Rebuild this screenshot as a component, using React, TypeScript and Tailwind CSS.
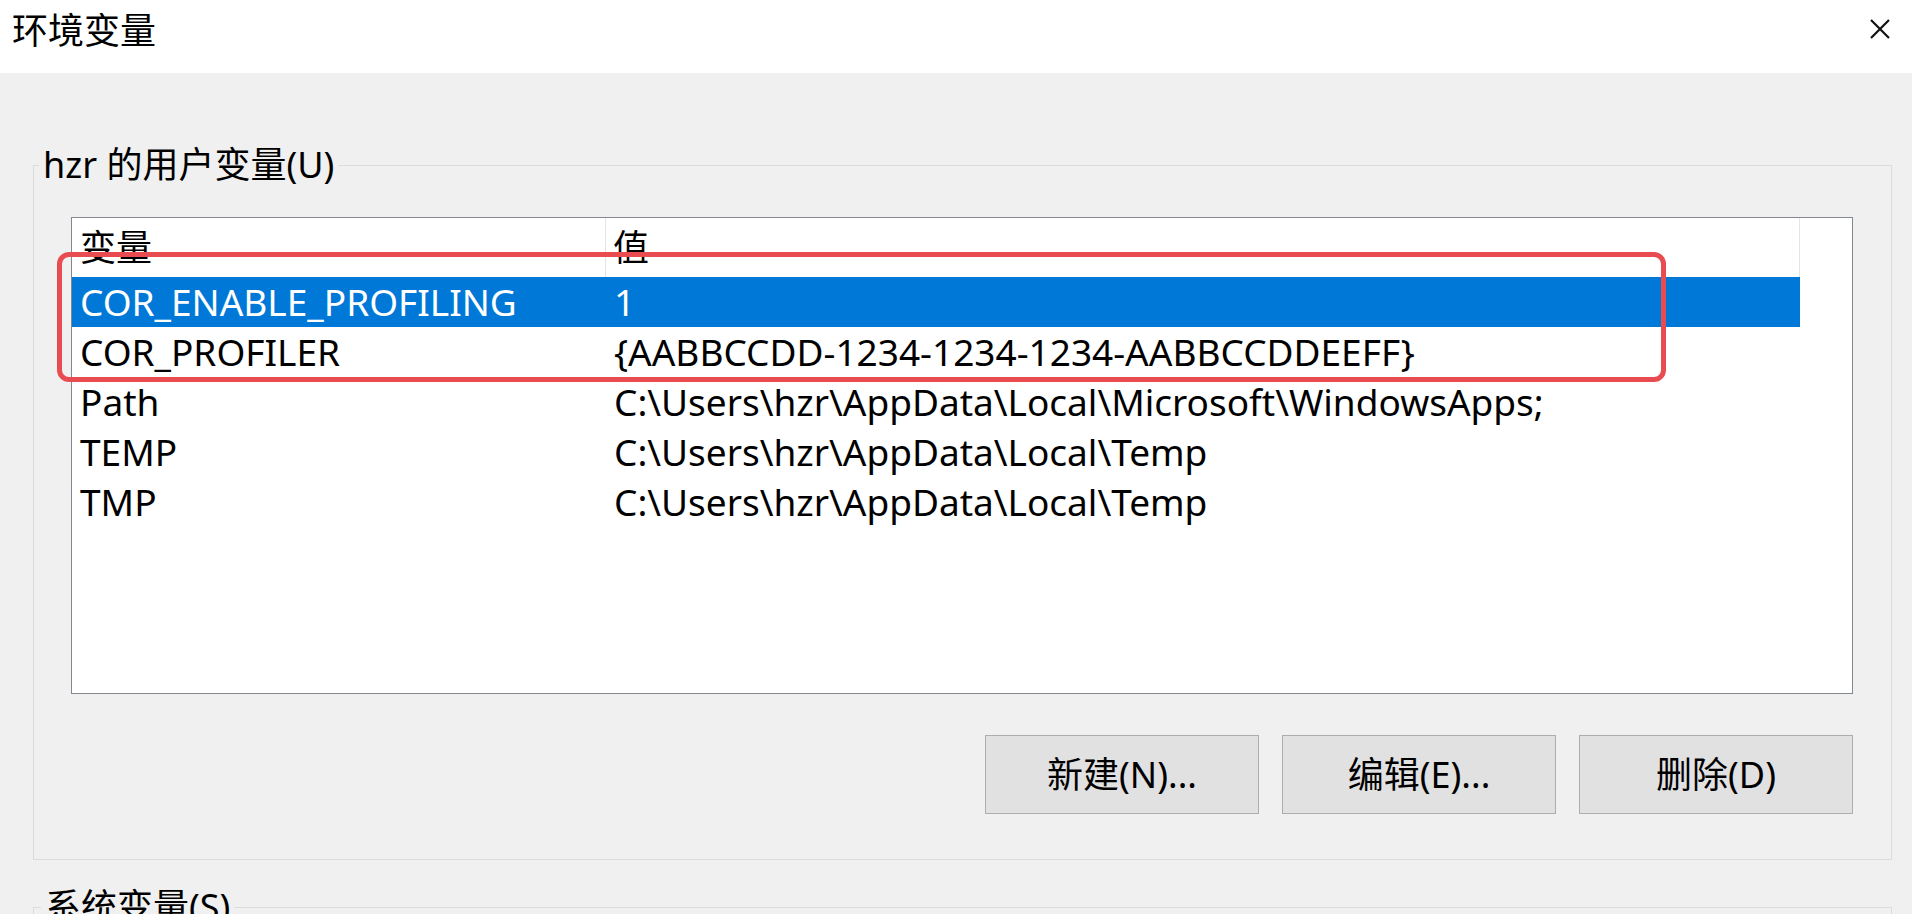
import { useState } from 'react'

const userVars = [
  { name: 'COR_ENABLE_PROFILING', value: '1' },
  { name: 'COR_PROFILER', value: '{AABBCCDD-1234-1234-1234-AABBCCDDEEFF}' },
  { name: 'Path', value: 'C:\\Users\\hzr\\AppData\\Local\\Microsoft\\WindowsApps;' },
  { name: 'TEMP', value: 'C:\\Users\\hzr\\AppData\\Local\\Temp' },
  { name: 'TMP', value: 'C:\\Users\\hzr\\AppData\\Local\\Temp' },
]

function WinButton({ label }: { label: string }) {
  return (
    <button className="flex h-[79px] w-[274px] items-center justify-center border border-[#adadad] bg-[#e1e1e1] text-[36px] text-black">
      {label}
    </button>
  )
}

export default function App() {
  const [selected, setSelected] = useState(0)

  return (
    <div className="relative h-[914px] w-[1912px] overflow-hidden bg-[#f0f0f0] font-['Noto_Sans','Noto_Sans_CJK_SC',sans-serif] text-[36px] leading-[44px] text-black">
      {/* Title bar */}
      <div className="flex h-[73px] items-start justify-between bg-white">
        <div className="pl-[12px] pt-[9px]">环境变量</div>
        <svg className="mr-[22px] mt-[19px]" width="20" height="20" viewBox="0 0 20 20">
          <path d="M1 1L19 19M19 1L1 19" stroke="#111" strokeWidth="2.2" />
        </svg>
      </div>

      <div className="pl-[33px] pr-[20px]">
        {/* User variables */}
        <fieldset className="mt-[70px] border border-[#dcdcdc] pb-[45px] pl-[37px] pr-[38px]">
          <legend className="-ml-[32px] px-[4px]">hzr 的用户变量(U)</legend>

          <div className="mt-[30px] h-[477px] border border-[#828790] bg-white">
            <div className="grid w-[1728px] grid-cols-[534px_1194px]">
              <div className="flex h-[59px] items-center border-r border-[#e5e5e5] pl-[8px]">变量</div>
              <div className="flex h-[59px] items-center border-r border-[#e5e5e5] pl-[7px]">值</div>
              {userVars.map((v, i) => {
                const rowCls =
                  i === selected
                    ? 'flex h-[50px] items-center bg-[#0078d7] text-white whitespace-nowrap text-[37px]'
                    : 'flex h-[50px] items-center whitespace-nowrap text-[37px]'
                return [
                  <div key={v.name + '-n'} className={rowCls + ' pl-[8px]'} onClick={() => setSelected(i)}>
                    {v.name}
                  </div>,
                  <div key={v.name + '-v'} className={rowCls + ' pl-[8px]'} onClick={() => setSelected(i)}>
                    {v.value}
                  </div>,
                ]
              })}
            </div>
          </div>

          <div className="mt-[41px] flex justify-end gap-[23px]">
            <WinButton label="新建(N)..." />
            <WinButton label="编辑(E)..." />
            <WinButton label="删除(D)" />
          </div>
        </fieldset>

        {/* System variables */}
        <fieldset className="mt-[25px] h-[200px] border border-[#dcdcdc]">
          <legend className="ml-[7px] px-[4px]">系统变量(S)</legend>
        </fieldset>
      </div>

      {/* red annotation */}
      <div className="absolute left-[57px] top-[252px] h-[130px] w-[1609px] rounded-[12px] border-[5px] border-[#e84b50]" />
    </div>
  )
}
